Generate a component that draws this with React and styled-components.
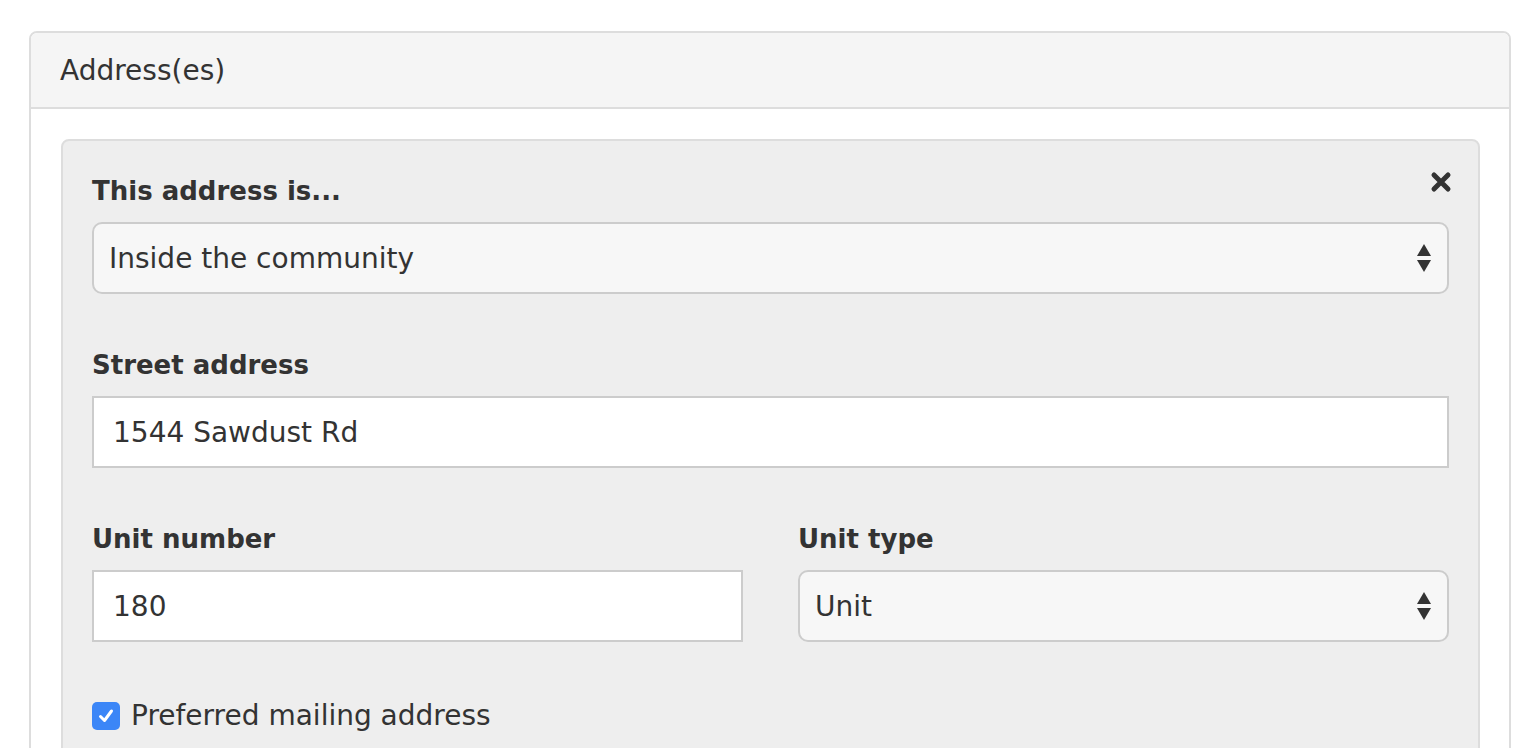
import styled, { createGlobalStyle } from "styled-components";

const GlobalStyle = createGlobalStyle`
  body {
    margin: 0;
    background: #fff;
    font-family: "DejaVu Sans", "Open Sans", sans-serif;
    color: #333;
  }
`;

export default function App() {
  return (
    <>
      <GlobalStyle />
      <Page>
        <Panel>
          <PanelHeading>Address(es)</PanelHeading>
          <PanelBody>
            <Well>
              <CloseButton aria-label="remove address">
                <svg width="22" height="22" viewBox="0 0 22 22">
                  <path
                    d="M4 4 L18 18 M18 4 L4 18"
                    stroke="#333"
                    strokeWidth="5"
                    strokeLinecap="round"
                  />
                </svg>
              </CloseButton>
              <Field>
                <Label>This address is...</Label>
                <SelectBox>
                  <span>Inside the community</span>
                  <Arrows />
                </SelectBox>
              </Field>
              <Field>
                <Label>Street address</Label>
                <TextBox>1544 Sawdust Rd</TextBox>
              </Field>
              <Row>
                <Field>
                  <Label>Unit number</Label>
                  <TextBox>180</TextBox>
                </Field>
                <Field>
                  <Label>Unit type</Label>
                  <SelectBox>
                    <span>Unit</span>
                    <Arrows />
                  </SelectBox>
                </Field>
              </Row>
              <CheckRow>
                <CheckBox>
                  <svg width="20" height="20" viewBox="0 0 20 20">
                    <path
                      d="M4.5 10.5 L8.5 14.5 L15.5 5"
                      fill="none"
                      stroke="#fff"
                      strokeWidth="3"
                      strokeLinecap="round"
                      strokeLinejoin="round"
                    />
                  </svg>
                </CheckBox>
                Preferred mailing address
              </CheckRow>
            </Well>
          </PanelBody>
        </Panel>
      </Page>
    </>
  );
}

function Arrows() {
  return (
    <ArrowIcon width="16" height="30" viewBox="0 0 16 30">
      <path d="M8 1 L15 13 L1 13 Z" fill="#333" />
      <path d="M1 17 L15 17 L8 29 Z" fill="#333" />
    </ArrowIcon>
  );
}

const Page = styled.div`
  padding: 31px 29px 0 29px;
  height: 748px;
  box-sizing: border-box;
  overflow: hidden;
`;

const Panel = styled.section`
  border: 2px solid #ddd;
  border-radius: 8px;
  background: #fff;
`;

const PanelHeading = styled.div`
  background: #f5f5f5;
  border-bottom: 2px solid #ddd;
  border-radius: 6px 6px 0 0;
  height: 74px;
  padding: 0 29px;
  display: flex;
  align-items: center;
  font-size: 28px;
  color: #333;
`;

const PanelBody = styled.div`
  padding: 30px 29px 0 30px;
`;

const Well = styled.div`
  position: relative;
  background: #eee;
  border: 2px solid #ddd;
  border-radius: 8px;
  padding: 30px 29px 60px 29px;
  display: flex;
  flex-direction: column;
  gap: 51px;
`;

const CloseButton = styled.button`
  position: absolute;
  top: 30px;
  right: 26px;
  padding: 0;
  border: 0;
  background: none;
  display: flex;
`;

const Field = styled.div`
  display: flex;
  flex-direction: column;
  gap: 11px;
  flex: 1;
`;

const Row = styled.div`
  display: flex;
  gap: 55px;
`;

const Label = styled.label`
  font-size: 26px;
  font-weight: bold;
  color: #333;
  line-height: 40px;
`;

const SelectBox = styled.div`
  height: 72px;
  box-sizing: border-box;
  border: 2px solid #ccc;
  border-radius: 10px;
  background: #f7f7f7;
  display: flex;
  align-items: center;
  justify-content: space-between;
  padding: 0 15px 0 15px;
  font-size: 28px;
  color: #333;
`;

const ArrowIcon = styled.svg`
  flex: none;
`;

const TextBox = styled.div`
  height: 72px;
  box-sizing: border-box;
  border: 2px solid #ccc;
  background: #fff;
  display: flex;
  align-items: center;
  padding: 0 19px;
  font-size: 28px;
  color: #333;
`;

const CheckRow = styled.label`
  display: flex;
  align-items: center;
  gap: 11px;
  margin-top: 6px;
  font-size: 28px;
  color: #333;
`;

const CheckBox = styled.span`
  width: 28px;
  height: 28px;
  border-radius: 5px;
  background: #3b86f7;
  display: flex;
  align-items: center;
  justify-content: center;
`;
